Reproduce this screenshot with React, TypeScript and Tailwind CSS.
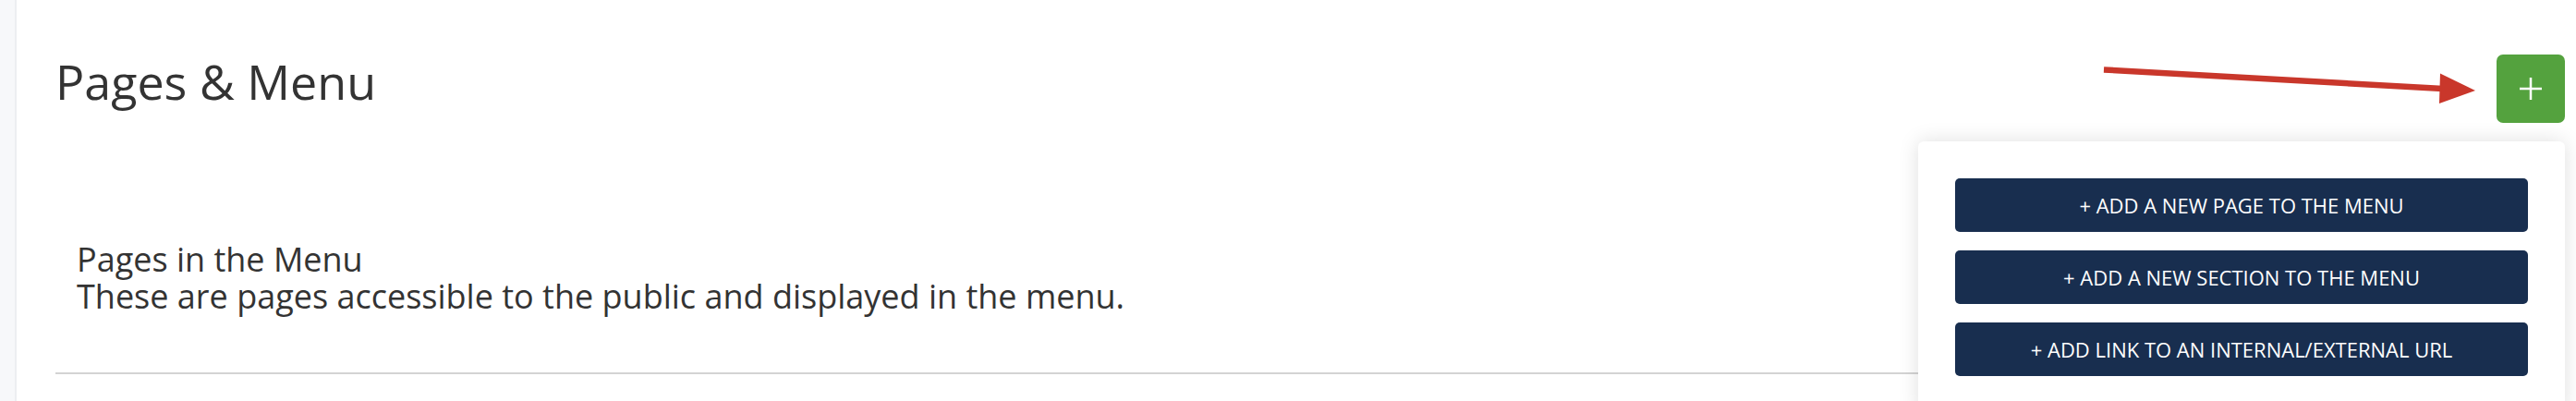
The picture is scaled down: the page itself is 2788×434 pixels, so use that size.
const menuActions = [
  '+ ADD A NEW PAGE TO THE MENU',
  '+ ADD A NEW SECTION TO THE MENU',
  '+ ADD LINK TO AN INTERNAL/EXTERNAL URL',
]

function PointerArrow() {
  // red annotation arrow that points at the add button
  return (
    <svg
      className="absolute left-0 top-0 pointer-events-none"
      width={2788}
      height={434}
      viewBox="0 0 2788 434"
    >
      <line x1={2277} y1={75.5} x2={2644} y2={96} stroke="#c9372b" strokeWidth={6.5} />
      <polygon points="2641,79.5 2679,98 2640,112" fill="#c9372b" />
    </svg>
  )
}

export default function App() {
  return (
    <div
      className="relative flex w-[2788px] h-[434px] overflow-hidden bg-white text-[#333333]"
      style={{ fontFamily: '"Open Sans", "Noto Sans", sans-serif' }}
    >
      <div className="w-[18px] shrink-0 bg-[#f7f8fa] border-r-2 border-[#eceef1]" />

      <main className="relative flex-1 pl-[42px] pr-[12px]">
        <div className="flex items-start justify-between pt-[57px]">
          <h1 className="text-[52px] leading-[62px] font-normal">Pages &amp; Menu</h1>
          <button className="mt-[2px] w-[74px] h-[74px] rounded-[7px] bg-[#54a23e] flex items-center justify-center">
            <svg width={26} height={26} viewBox="0 0 26 26">
              <path d="M1 13h24M13 1v24" stroke="#ffffff" strokeWidth={2.5} />
            </svg>
          </button>
        </div>

        <div className="mt-[128px] pl-[23px] text-[36px] leading-[40px]">
          <p>Pages in the Menu</p>
          <p>These are pages accessible to the public and displayed in the menu.</p>
        </div>

        <div className="mt-[62px] h-[2px] bg-[#d3d3d3]" />

        <div className="absolute top-[153px] right-[12px] w-[700px] rounded-[6px] bg-white p-[40px] shadow-[0_0_22px_rgba(0,0,0,0.13)]">
          <div className="flex flex-col gap-[20px]">
            {menuActions.map(label => (
              <button
                key={label}
                className="h-[58px] rounded-[5px] bg-[#182e4f] text-white text-[22px] flex items-center justify-center"
              >
                {label}
              </button>
            ))}
          </div>
        </div>
      </main>

      <PointerArrow />
    </div>
  )
}
